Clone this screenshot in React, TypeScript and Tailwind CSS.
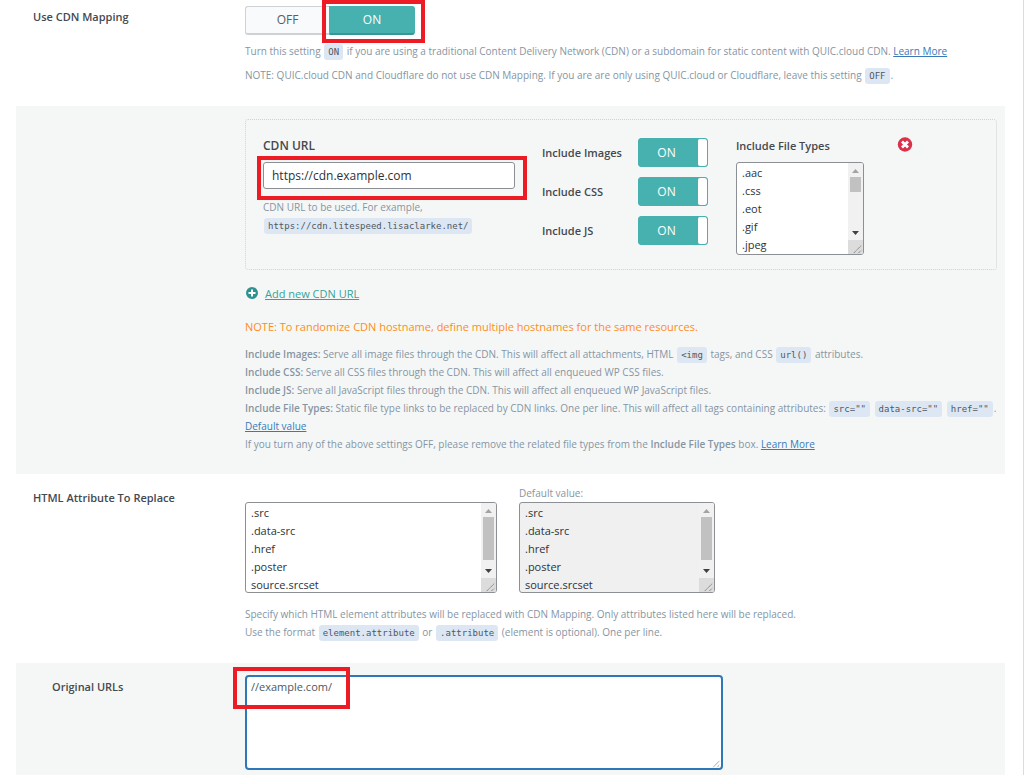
import type { ReactNode } from "react";

const attributes = ".src\n.data-src\n.href\n.poster\nsource.srcset";
const fileTypes = ".aac\n.css\n.eot\n.gif\n.jpeg";

function Code({ children }: { children: ReactNode }) {
  return (
    <code className="mx-px inline-block h-4 rounded-[3px] bg-[#dde7f4] px-1 font-['DejaVu_Sans_Mono',monospace] text-[9px] leading-4 text-[#50575e]">
      {children}
    </code>
  );
}

function Link({ children }: { children: ReactNode }) {
  return (
    <a href="#" className="text-[#3a79b7] underline">
      {children}
    </a>
  );
}

function Grip({ className }: { className: string }) {
  return (
    <svg viewBox="0 0 14 14" className={className} fill="none" stroke="#777" strokeWidth="1">
      <path d="M4 13l8-8M9 13l3-3" strokeDasharray="1.5 0.5" />
    </svg>
  );
}

function ScrollBar({ thumb }: { thumb: string }) {
  return (
    <div className="flex w-[15px] shrink-0 flex-col items-center bg-[#f1f1f1]">
      <svg viewBox="0 0 15 14" className="h-[14px] w-[15px] shrink-0" fill="#a3a3a3">
        <path d="M4 10h7L7.500 6z" />
      </svg>
      <div className={`w-[11px] bg-[#c1c1c1] ${thumb}`}></div>
      <svg viewBox="0 0 15 14" className="mt-auto h-[14px] w-[15px] shrink-0" fill="#404040">
        <path d="M4 5h7L7.500 9z" />
      </svg>
      <div className="flex h-[14px] w-[15px] shrink-0 items-end justify-end bg-[#dcdcdc]">
        <Grip className="size-[13px]" />
      </div>
    </div>
  );
}

type ListBoxProps = {
  id: string;
  value: string;
  thumb: string;
  className: string;
  readOnly?: boolean;
};

function ListBox({ id, value, thumb, className, readOnly }: ListBoxProps) {
  return (
    <div className={`flex overflow-hidden rounded-[3px] border border-[#8c8f94] ${className}`}>
      <textarea
        id={id}
        defaultValue={value}
        readOnly={readOnly}
        className="min-w-0 flex-1 resize-none overflow-hidden px-[5px] pt-px text-[11px] leading-[18px] text-[#2c3338] outline-none"
      />
      <ScrollBar thumb={thumb} />
    </div>
  );
}

function Toggle({ id, label }: { id: string; label: string }) {
  return (
    <div className="flex items-center">
      <span id={id} className="w-[96px] font-semibold">
        {label}
      </span>
      <button
        type="button"
        role="switch"
        aria-checked="true"
        aria-labelledby={id}
        className="flex h-[29px] w-[70px] overflow-hidden rounded-[3px] border border-[#46b1af] bg-[#46b1af] text-[12px] leading-[27px] text-white"
      >
        <span className="flex-1 pr-1 text-center">ON</span>
        <span className="h-full w-[9px] rounded-[2px] bg-white"></span>
      </button>
    </div>
  );
}

// red frame around a control the reader should look at
function Mark({ className }: { className: string }) {
  return <div className={`pointer-events-none absolute z-10 border-4 border-[#ed1c24] ${className}`}></div>;
}

function Row({ title, className, titleClass, children }: { title?: ReactNode; className: string; titleClass?: string; children: ReactNode }) {
  return (
    <section className={`flex ${className}`}>
      <div className={`w-[229px] shrink-0 pl-[17px] font-semibold ${titleClass ?? ""}`}>{title}</div>
      <div className="min-w-0 flex-1">{children}</div>
    </section>
  );
}

export default function App() {
  return (
    <main className="flex min-h-screen flex-col border-r border-[#dcdcde] bg-white pr-[18px] pl-4 font-['Open_Sans',sans-serif] text-[11px] leading-[18px] text-[#444950]">
      <Row title="Use CDN Mapping" className="pt-[6px] pb-[22px]" titleClass="pt-[2px]">
        <div className="relative flex w-[170px] text-[12px]">
          <button type="button" className="h-[29px] w-[84px] rounded-l-[3px] border border-r-0 border-b-2 border-[#cfd2d4] bg-[#f9fafc] text-[#555d66]">
            OFF
          </button>
          <button type="button" className="h-[29px] flex-1 rounded-r-[3px] border border-b-2 border-[#46b1af] border-b-[#379795] bg-[#46b1af] text-white">
            ON
          </button>
          <Mark className="-top-[6px] -right-[10px] h-[43px] w-[103px]" />
        </div>
        <div className="mt-[7px] text-[10px] text-[#8595a3]">
          <p>
            Turn this setting <Code>ON</Code> if you are using a traditional Content Delivery Network (CDN) or a subdomain for static content with QUIC.cloud CDN. <Link>Learn More</Link>
          </p>
          <p className="mt-[6px]">
            NOTE: QUIC.cloud CDN and Cloudflare do not use CDN Mapping. If you are are only using QUIC.cloud or Cloudflare, leave this setting <Code>OFF</Code>.
          </p>
        </div>
      </Row>

      <Row className="bg-[#f5f7f7] pt-[13px] pb-[21px]">
        <div className="mr-[8px] flex items-start rounded-[3px] border border-dotted border-[#cfd2d4] px-[17px] pt-[17px] pb-[14px]">
          <div className="w-[279px]">
            <label htmlFor="cdn-url" className="block text-[12px] font-semibold">
              CDN URL
            </label>
            <div className="relative mt-[7px]">
              <input
                id="cdn-url"
                type="text"
                defaultValue="https://cdn.example.com"
                className="block h-[27px] w-[252px] rounded-[3px] border border-[#8c8f94] bg-white px-2 text-[12px] text-[#2c3338]"
              />
              <Mark className="-top-[6px] -left-[6px] h-[44px] w-[270px]" />
            </div>
            <p className="mt-[9px] text-[10px] text-[#8595a3]">
              CDN URL to be used. For example,
              <br />
              <Code>https://cdn.litespeed.lisaclarke.net/</Code>
            </p>
          </div>
          <div className="flex w-[194px] flex-col gap-[10px] pt-px">
            <Toggle id="inc-img" label="Include Images" />
            <Toggle id="inc-css" label="Include CSS" />
            <Toggle id="inc-js" label="Include JS" />
          </div>
          <div className="w-[161px]">
            <label htmlFor="file-types" className="block font-semibold">
              Include File Types
            </label>
            <ListBox id="file-types" value={fileTypes} thumb="h-[15px]" className="mt-[7px] h-[93px] w-[128px] bg-white" />
          </div>
          <button type="button" aria-label="Remove CDN URL">
            <svg viewBox="0 0 16 16" className="size-4" fill="none">
              <circle cx="8" cy="7.500" r="7.200" fill="#dc3048" />
              <path d="M5 4.500l6 6M11 4.500l-6 6" stroke="#fff" strokeWidth="2.800" />
            </svg>
          </button>
        </div>

        <a href="#" className="mt-[15px] flex w-fit items-center text-[#36a39a]">
          <svg viewBox="0 0 14 14" className="mr-[6px] size-[14px]" fill="none">
            <circle cx="7" cy="6" r="6" fill="#2f9290" />
            <path d="M7 2.500v7M3.500 6h7" stroke="#fff" strokeWidth="2" />
          </svg>
          <span className="underline">Add new CDN URL</span>
        </a>
        <p className="mt-[15px] text-[11px] font-medium text-[#ff8c1a]">NOTE: To randomize CDN hostname, define multiple hostnames for the same resources.</p>
        <div className="mt-[9px] text-[10px] text-[#8595a3]">
          <p>
            <strong className="font-semibold">Include Images:</strong> Serve all image files through the CDN. This will affect all attachments, HTML <Code>&lt;img</Code> tags, and CSS <Code>url()</Code> attributes.
          </p>
          <p>
            <strong className="font-semibold">Include CSS:</strong> Serve all CSS files through the CDN. This will affect all enqueued WP CSS files.
          </p>
          <p>
            <strong className="font-semibold">Include JS:</strong> Serve all JavaScript files through the CDN. This will affect all enqueued WP JavaScript files.
          </p>
          <p>
            <strong className="font-semibold">Include File Types:</strong> Static file type links to be replaced by CDN links. One per line. This will affect all tags containing attributes: <Code>src=""</Code>{" "}
            <Code>data-src=""</Code> <Code>href=""</Code>.
          </p>
          <p>
            <Link>Default value</Link>
          </p>
          <p>
            If you turn any of the above settings OFF, please remove the related file types from the <strong className="font-semibold">Include File Types</strong> box. <Link>Learn More</Link>
          </p>
        </div>
      </Row>

      <Row
        title={<label htmlFor="html-attr">HTML Attribute To Replace</label>}
        className="pt-[10px] pb-[22px]"
        titleClass="pt-[5px]"
      >
        <div className="flex items-end gap-[22px]">
          <ListBox id="html-attr" value={attributes} thumb="h-[43px]" className="h-[91px] w-[252px] bg-white" />
          <div>
            <label htmlFor="html-attr-default" className="block text-[10px] text-[#8595a3]">
              Default value:
            </label>
            <ListBox id="html-attr-default" readOnly value={attributes} thumb="h-[43px]" className="h-[91px] w-[196px] bg-[#f0f0f0]" />
          </div>
        </div>
        <div className="mt-[12px] text-[10px] text-[#8595a3]">
          <p>Specify which HTML element attributes will be replaced with CDN Mapping. Only attributes listed here will be replaced.</p>
          <p>
            Use the format <Code>element.attribute</Code> or <Code>.attribute</Code> (element is optional). One per line.
          </p>
        </div>
      </Row>

      <Row
        title={<label htmlFor="original-urls" className="pl-[19px]">Original URLs</label>}
        className="flex-1 bg-[#f5f7f7] pt-[12px] pb-[5px]"
        titleClass="pt-[3px]"
      >
        <div className="relative w-[478px]">
          <textarea
            id="original-urls"
            defaultValue="//example.com/"
            className="block h-[95px] w-full resize-none overflow-hidden rounded-[4px] border-2 border-[#2e78b7] bg-white px-1 pt-px text-[11px] leading-[18px] text-[#50575e] outline-none"
          />
          <Grip className="absolute right-[2px] bottom-[2px] size-[11px]" />
          <Mark className="-top-[8px] -left-[12px] h-[42px] w-[117px]" />
        </div>
      </Row>
    </main>
  );
}
